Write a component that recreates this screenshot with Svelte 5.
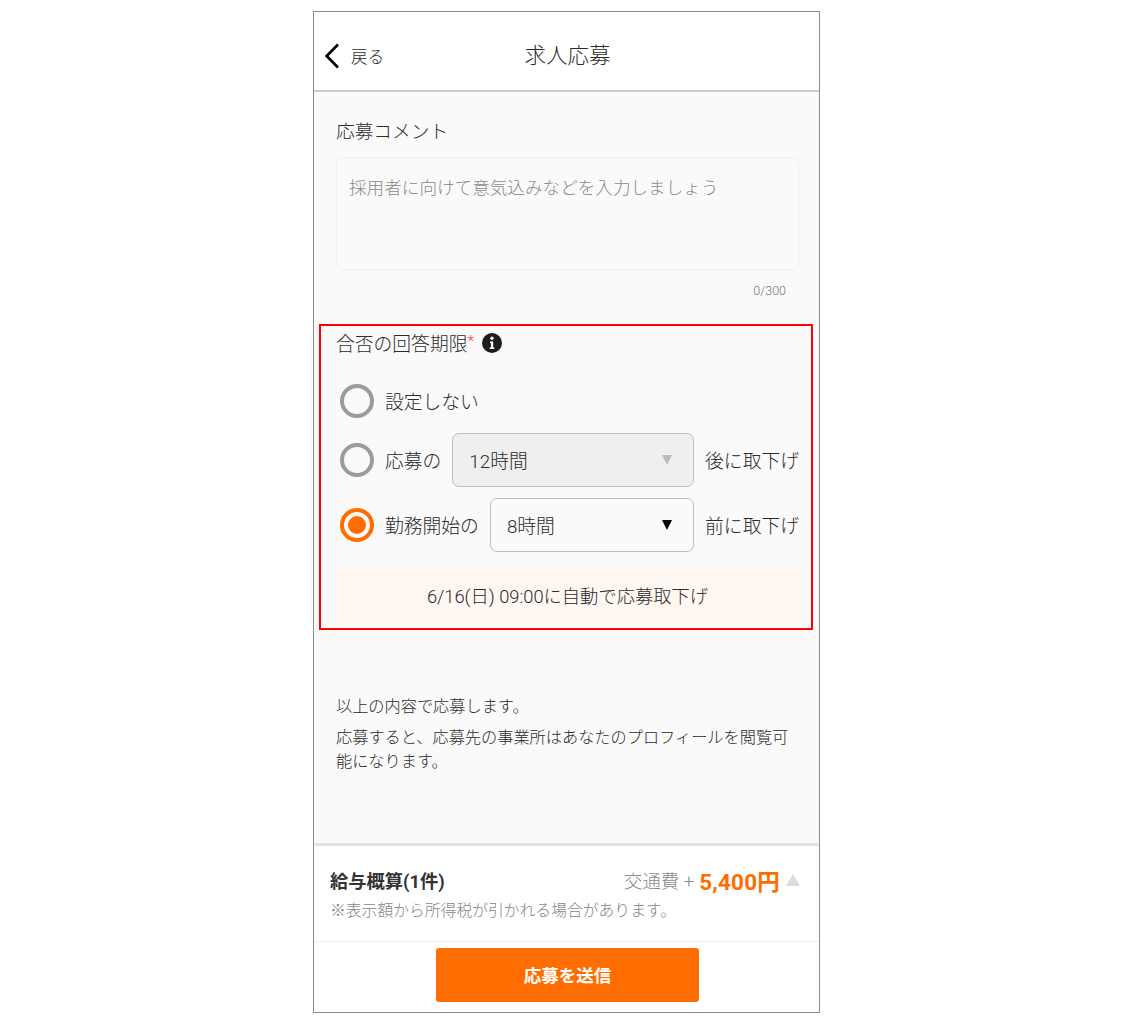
<script>
  let comment = '';
</script>

<div class="page">
  <div class="phone">
    <header class="head">
      <div class="back">
        <svg width="16" height="26" viewBox="0 0 16 26" aria-hidden="true"><path d="M14 1.5 L2.6 13 L14 24.5" fill="none" stroke="#000" stroke-width="2.6"/></svg>
        <span>戻る</span>
      </div>
      <h1>求人応募</h1>
    </header>

    <main class="body">
      <div class="comment">
        <div class="label">応募コメント</div>
        <div class="textarea">採用者に向けて意気込みなどを入力しましょう</div>
        <div class="count">{comment.length}/300</div>
      </div>

      <section class="deadline">
        <div class="dl-title"><span class="dl-text">合否の回答期限</span><span class="req">*</span>
          <svg class="info" width="20" height="20" viewBox="0 0 20 20" aria-hidden="true"><circle cx="10" cy="10" r="10" fill="#1d1d1d"/><circle cx="10" cy="5.2" r="1.7" fill="#fff"/><path d="M8 8.6h3.2v6h1.2v1.500H7.700v-1.500h1.200V10.100H8z" fill="#fff"/></svg>
        </div>
        <div class="row first"><span class="radio"></span><span class="txt">設定しない</span></div>
        <div class="row second">
          <span class="radio"></span><span class="txt">応募の</span>
          <div class="select off"><span class="txt">12時間</span><i class="tri grey"></i></div>
          <span class="txt">後に取下げ</span>
        </div>
        <div class="row third">
          <span class="radio on"></span><span class="txt">勤務開始の</span>
          <div class="select"><span class="txt">8時間</span><i class="tri"></i></div>
          <span class="txt">前に取下げ</span>
        </div>
        <div class="notice">6/16(日) 09:00に自動で応募取下げ</div>
      </section>

      <div class="terms">
        <p>以上の内容で応募します。</p>
        <p>応募すると、応募先の事業所はあなたのプロフィールを閲覧可能になります。</p>
      </div>
    </main>

    <footer class="foot">
      <div class="sum">
        <div class="sum-top">
          <strong>給与概算(1件)</strong>
          <div class="price"><span class="trans">交通費 +</span><b>5,400円</b><i class="up"></i></div>
        </div>
        <div class="note">※表示額から所得税が引かれる場合があります。</div>
      </div>
      <div class="action"><button>応募を送信</button></div>
    </footer>
  </div>
</div>

<style>
  :global(body) { margin: 0; background: #fff; }
  .page { display: flex; justify-content: center; padding-top: 11px; font-family: Roboto, "Noto Sans CJK JP", sans-serif; color: #2b2b2b; font-weight: 300; }
  .phone { width: 505px; height: 1000px; border: 1px solid #8a8a8a; background: #fafafa; display: flex; flex-direction: column; position: relative; left: -0.5px; }
  .head { height: 68px; padding-top: 10px; background: #fff; border-bottom: 2px solid #ccc; display: flex; align-items: center; justify-content: center; position: relative; flex: none; }
  .head h1 { margin: 0; font-size: 21.5px; font-weight: 300; line-height: 28px; position: relative; left: 1px; }
  .back { position: absolute; left: 10px; top: 31px; display: flex; align-items: center; gap: 11px; font-size: 16.5px; }
  .body { flex: 1; display: flex; flex-direction: column; padding: 0 5px; }
  .comment { padding: 27px 15px 0 17px; }
  .label { font-size: 18.7px; line-height: 27px; }
  .textarea { margin-top: 11px; height: 95px; border: 1px solid #f0f0f0; border-radius: 6px; padding: 16px 12px 0; font-size: 17.6px; line-height: 28px; color: #8a8a8a; }
  .count { text-align: right; font-size: 12.5px; color: #777; line-height: 18px; margin-top: 12px; padding-right: 13px; }
  .deadline { margin-top: 24px; width: 494px; box-sizing: border-box; height: 306px; border: 2px solid #f00; padding: 0 12px 0 15px; }
  .dl-title { display: flex; align-items: center; height: 34px; font-size: 18.8px; }
  .dl-text { padding-bottom: 2px; }
  .req { color: #f33; font-size: 15.5px; margin-top: -4px; }
  .info { margin-left: 8px; }
  .row { display: flex; align-items: center; gap: 11px; font-size: 18.8px; padding-left: 4px; }
  .first { height: 34px; margin-top: 24px; }
  .second { height: 54px; margin-top: 15px; }
  .third { height: 54px; margin-top: 11px; }
  .radio { width: 34px; height: 34px; box-sizing: border-box; border: 4px solid #9b9b9b; border-radius: 50%; flex: none; position: relative; }
  .radio.on { border-color: #ff6d00; }
  .radio.on::after { content: ""; position: absolute; inset: 4px; background: #ff6d00; border-radius: 50%; }
  .txt { white-space: nowrap; padding-bottom: 2px; }
  .select { flex: 1; height: 54px; box-sizing: border-box; border: 1px solid #bdbdbd; border-radius: 7px; display: flex; align-items: center; justify-content: space-between; padding: 0 21px 0 16px; }
  .select.off { background: #efefef; }
  .tri { width: 0; height: 0; border-left: 5.5px solid transparent; border-right: 5.5px solid transparent; border-top: 10px solid #000; }
  .tri.grey { border-top-color: #bbb; }
  .notice { margin-top: 16px; height: 53px; padding-bottom: 2px; background: #fef7f2; display: flex; align-items: center; justify-content: center; font-size: 18.3px; }
  .terms { padding: 65px 20px 0 17px; font-size: 16.2px; line-height: 24px; }
  .terms p { margin: 0 0 7px; }
  .foot { flex: none; height: 169px; background: #fff; border-top: 3px solid #e2e2e2; box-sizing: border-box; border-radius: 3px 3px 0 0; display: flex; flex-direction: column; }
  .sum { height: 96px; flex: none; border-bottom: 1px solid #eee; box-sizing: border-box; padding: 18px 19px 0 16px; }
  .sum-top { display: flex; justify-content: space-between; align-items: center; height: 32px; }
  .sum-top strong { font-size: 18.3px; font-weight: 700; color: #333; }
  .price { display: flex; align-items: center; }
  .trans { font-size: 18.4px; color: #8a8a8a; }
  .price b { color: #ff6d00; font-size: 22.5px; font-weight: 700; margin-left: 5px; letter-spacing: 0.2px; }
  .up { width: 0; height: 0; border-left: 7px solid transparent; border-right: 7px solid transparent; border-bottom: 12px solid #ddd; margin-left: 6px; }
  .note { font-size: 15.8px; color: #858585; line-height: 24px; margin-top: 3px; white-space: nowrap; }
  .action { display: flex; justify-content: center; padding-top: 6px; }
  button { width: 263px; height: 54px; border: 0; border-radius: 3px; padding: 0 0 2px; background: #ff6d00; color: #fff; font: 700 17.5px Roboto, "Noto Sans CJK JP", sans-serif; position: relative; left: 1px; }
</style>
